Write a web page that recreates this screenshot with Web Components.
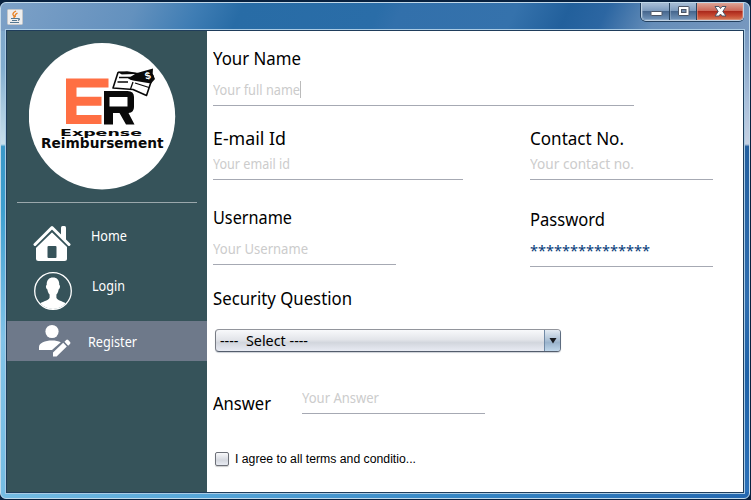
<!DOCTYPE html>
<html lang="en"><head><meta charset="utf-8"><title>Register</title>
<style>
html,body{margin:0;height:100%;overflow:hidden;background:#0b3a70;font-family:"Noto Sans",sans-serif}
</style></head><body>
<app-window>
  <side-bar slot="side">
    <nav-item icon="home" style="--h:46px;--x:84px;--y:5px" w="36">Home</nav-item>
    <nav-item icon="login" style="--h:53px;--x:85px;--y:9px" w="33">Login</nav-item>
    <nav-item icon="register" active style="--h:40px;--x:81px;--y:12px" w="49">Register</nav-item>
  </side-bar>
  <register-form></register-form>
</app-window>
<script>
const define=(name,html,after)=>customElements.define(name,class extends HTMLElement{
  connectedCallback(){
    if(this.shadowRoot)return;
    const t=document.createElement('template');
    t.innerHTML=typeof html==='function'?html(this):html;
    this.attachShadow({mode:'open'}).append(t.content.cloneNode(true));
    if(after)after(this);
  }
});

/* A line of text condensed or widened to a given width. */
define('fit-text',`<style>:host{display:block;white-space:pre;width:max-content}
span{display:inline-block;vertical-align:top;transform-origin:0 0}</style><span><slot></slot></span>`,el=>{
  const w=+el.getAttribute('w'),s=el.shadowRoot.querySelector('span');
  if(w){
    s.style.transform='scaleX('+w/s.getBoundingClientRect().width+')';
    el.style.width=w+'px';
  }
});

const icons={
home:`<svg width="38" height="37" viewBox="0 0 38 37" style="margin:2px 0 0 26px"><path fill="#fff" d="M19 7.500 34 22v12.500q0 2.500-2.500 2.500H5.500Q3 37 3 34.500V22z"/><path fill="none" stroke="#36535a" stroke-width="5.500" d="M1 22 19 4.500 37 22"/><path fill="#fff" d="M28 3.500q0-1.500 1.500-1.500h2q1.500 0 1.500 1.500V18l-5-5z"/><path fill="none" stroke="#fff" stroke-width="3" stroke-linecap="round" stroke-linejoin="round" d="M2 20.500 19 3.500 36 20.500"/><rect x="14.500" y="22" width="9" height="12" rx="1" fill="#36535a"/></svg>`,
login:`<svg width="38" height="38" viewBox="0 0 38 38" style="margin:4px 0 0 27px"><circle cx="19" cy="19" r="18.300" fill="none" stroke="#fff" stroke-width="1.300"/><path fill="#fff" d="M12.700 13C12.500 8 15 5.500 19 5.500s6.500 2.500 6.300 7.500c1.200.3.900 3.700-.7 4.500-.3 2.500-1.200 4-2.200 5v3.200c1.200 2.800 6 3.500 9.300 5.500A17.800 17.800 0 0 1 19 37a17.800 17.800 0 0 1-12.700-5.800c3.300-2 8.100-2.700 9.300-5.500v-3.200c-1-1-1.900-2.500-2.200-5-1.600-.8-1.900-4.200-.7-4.500z"/></svg>`,
register:`<svg width="34" height="34" viewBox="0 0 34 34" style="margin:3px 0 0 31px"><circle cx="14" cy="7.500" r="6.600" fill="#fff"/><path fill="#fff" d="M1 26v-3c0-4 6-6.500 13-6.500 3.500 0 6.500.5 8.800 1.700L14 26z"/><path fill="#fff" d="m15 28.500 10.200-9.700 3.600 3.800L18.600 32.500H15zM26.500 17.700l1.700-1.700q1-.9 2 .1l1.900 2q.8 1-.1 1.900l-1.800 1.700z"/></svg>`};

define('nav-item',e=>`<style>
:host{display:flex;position:relative;height:var(--h);color:#fff;font-size:14px}
:host([active]){background:#6e798a}
svg{display:block}
fit-text{position:absolute;left:var(--x);top:var(--y);line-height:18px}
</style>${icons[e.getAttribute('icon')]}<fit-text w="${e.getAttribute('w')}">${e.textContent}</fit-text>`);

define('brand-logo',`<style>:host{display:block;width:147px;height:147px}svg{display:block}</style>
<svg width="147" height="147" viewBox="0 0 147 147"><circle cx="73" cy="73.200" r="73.200" fill="#fff"/>
<path fill="#ff6f43" d="M37 35.500H79.500V44.500H47.500V53.700H72.500V62.700H47.500V72H72.500V81H37z"/>
<path fill="#090909" fill-rule="evenodd" d="M75 48H98.500q6.500 0 6.500 6v10q0 5.500-5.500 6L105.500 81.500H97L90.500 70H84V81.500H75zM80.500 54V63.500H98.500V54z"/>
<path fill="#fff" stroke="#090909" stroke-width="1.600" stroke-linejoin="round" d="M89 29.500 84 45 104 46.500 117.500 52.500 122 39 124 33 98 29z"/>
<path fill="#090909" d="M89 28.500 108 30l16-4.500-.3 5 2.300 5.500-4 4.500-24-4z"/>
<path fill="#fff" d="M90.500 31.500 106 31l-7 4.500 6 3-17 1z"/>
<path fill="none" stroke="#090909" stroke-width="1.300" d="M90 34.500h13M88.500 39H99M104 39 101.500 46M106 40l14 4.500"/>
<text x="116" y="36" font-family="Liberation Sans" font-weight="bold" font-size="10" fill="#fff" transform="rotate(-15 119 33)">$</text>
<g font-family="DejaVu Sans" font-weight="bold" fill="#090909"><text x="31" y="93" font-size="9.500" textLength="82" lengthAdjust="spacingAndGlyphs">Expense</text>
<text x="12" y="105.300" font-size="13.500" textLength="122.500" lengthAdjust="spacingAndGlyphs">Reimbursement</text></g></svg>`);

define('side-bar',`<style>
:host{display:block;width:200px;background:#36535a}
brand-logo{margin:12px 0 0 22px}
hr{border:0;height:1px;background:#9ba8ac;margin:12px 10px 19px}
.wrap{display:flow-root}
</style><div class="wrap"><brand-logo></brand-logo><hr><slot></slot></div>`);

define('text-field',e=>`<style>
:host{display:block;width:var(--w)}
.label{font-size:18px;line-height:24px;color:#000}
.value{font-size:14px;line-height:18px;color:#ccc;margin-top:var(--gap,11px);display:flex}
:host([bare]) .value{margin-top:0}
:host([secret]) .value{color:#043a78}
i{width:1px;height:17px;background:#bbb}
.line{height:1px;background:#a6a9b3;margin-top:var(--pad,6px)}
</style>${e.hasAttribute('label')?`<fit-text class="label" w="${e.getAttribute('lw')}">${e.getAttribute('label')}</fit-text>`:''}
<div class="value"><fit-text w="${e.getAttribute('vw')}">${e.getAttribute('value')}</fit-text>${e.hasAttribute('caret')?'<i></i>':''}</div><div class="line"></div>`);

define('combo-box',`<style>
:host{display:flex;box-sizing:border-box;width:346px;height:23px;border:1px solid #7b7f89;border-color:#92959c #5d6c80 #535d6c #777b84;border-radius:4px;overflow:hidden;background:linear-gradient(#f8f9fb,#e3e5ea 45%,#d2d6dd 60%,#e8ebf3);box-shadow:0 1px 1px #ccd0d6}
fit-text{flex:none;margin-left:4px;font-size:14px;line-height:22px;color:#000}
.arrow{margin-left:auto;width:16px;box-sizing:border-box;border-left:1px solid #718aa6;background:linear-gradient(#e3ebf3,#afc3d7 45%,#9ab3cc 60%,#c0d7eb);display:flex;align-items:center;justify-content:center}
svg{display:block}
</style><fit-text w="88">----  Select ----</fit-text><div class="arrow"><svg width="8" height="6"><path d="M.5 0h7L4 5.500z" fill="#181b20"/></svg></div>`);

define('check-box',e=>`<style>
:host{display:flex;align-items:center;gap:6px;height:16px;font:12px "Liberation Sans",sans-serif;color:#000}
.box{box-sizing:border-box;width:14px;height:14px;border:1px solid #6d7078;border-radius:2px;background:linear-gradient(#f9f9fb,#d5d8df 60%,#e8ebf2);box-shadow:0 1px 1px #ccc}
</style><div class="box"></div><fit-text w="181">${e.textContent}</fit-text>`);

define('register-form',`<style>
:host{display:flex;flex-direction:column;flex:1;box-sizing:border-box;padding:15px 0 0 6px;background:#fff}
.row{display:flex}
.title{font-size:18px;line-height:24px;color:#000}
</style>
<text-field style="--w:421px" label="Your Name" lw="88" value="Your full name" vw="87" caret></text-field>
<div class="row" style="margin-top:20px;gap:67px">
<text-field style="--w:250px;--gap:5px" label="E-mail Id" lw="73" value="Your email id" vw="77"></text-field>
<text-field style="--w:183px;--gap:5px" label="Contact No." lw="94" value="Your contact no." vw="104"></text-field></div>
<div class="row" style="margin-top:25px;gap:134px">
<text-field style="--w:183px" label="Username" lw="79" value="Your Username" vw="95"></text-field>
<text-field secret style="--w:183px;padding-top:2px" label="Password" lw="75" value="***************" vw="120"></text-field></div>
<fit-text class="title" style="margin-top:19px" w="139">Security Question</fit-text>
<combo-box style="margin:19px 0 0 2px"></combo-box>
<div class="row" style="margin-top:37px">
<fit-text class="title" style="margin-top:2px" w="58">Answer</fit-text>
<text-field bare style="--w:183px;margin-left:31px" value="Your Answer" vw="77"></text-field></div>
<check-box style="margin:36px 0 0 2px">I agree to all terms and conditio...</check-box>`);

define('window-buttons',`<style>
:host{display:flex;box-sizing:border-box;width:103px;height:18px;border:1px solid #c0d1e2;border-top:0;border-radius:0 0 5px 5px;margin-right:5px;box-shadow:0 1px 0 #23405f,-1px 0 0 #23405f}
div{width:28px;display:flex;justify-content:center;align-items:center;background:linear-gradient(#a9bfd7,#7d9bbd 45%,#47678e 50%,#7396bb);box-shadow:inset -1px 0 #29445f,inset 0 0 0 1px #9eb6ce80}
.min{border-radius:0 0 0 4px}
.max{width:27px}
.close{flex:1;border-radius:0 0 4px;background:linear-gradient(#dda496,#cc6858 45%,#ac2a1c 50%,#c64a32 75%,#d47c58);box-shadow:inset 0 0 0 1px #e3a29380}
</style><div class="min"><svg width="13" height="13"><rect x="1" y="6.500" width="11" height="4" rx=".5" fill="#fff" stroke="#4b5566"/></svg></div>
<div class="max"><svg width="12" height="11"><rect x=".5" y=".5" width="10.500" height="9" rx=".5" fill="#fff" stroke="#4b5566"/><rect x="3.500" y="3.500" width="4.500" height="3" fill="#718cae" stroke="#4b5566"/></svg></div>
<div class="close"><svg width="13" height="11" viewBox="0 0 13 11"><path d="M1 .5h4l1.500 2 1.500-2h4L8.800 5.500 12 10H8L6.500 8 5 10H1l3.200-4.500z" fill="#fff" stroke="#4b5566"/></svg></div>`);

define('app-window',`<style>
:host{display:flex;flex-direction:column;box-sizing:border-box;position:relative;width:751px;height:500px;padding:2px 1px 1px 0;background:#08213f}
.frame{display:flex;flex-direction:column;flex:1;box-sizing:border-box;border:1px solid #c2d9ea;border-radius:6px;
background:
linear-gradient(90deg,#75bce3,#55a5d8 28%,#3788c6 60%,#2468b0) bottom/100% 6px no-repeat,
linear-gradient(115deg,#7da1c7 0,#6c96c1 12%,#6391be 18%,#3f7db4 26%,#286ca6 32%,#2a6da8 50%,#3270ab 53%,#3572ac 68%,#22609c 75%,#2c66a2 80%,#668eb9 87%,#7798bf 100%) top/100% 28px no-repeat,
linear-gradient(#7fa5c9 0,#81adcf 13%,#a9c9df 21%,#c8dfec 28.500%,#3a97c8 29%,#3e9fd0 42%,#82c3e8 68%,#75bce3) left/6px 100% no-repeat,
linear-gradient(#7597bf 0,#7f9fc5 8%,#aabfda 20%,#c5d1e3 28.500%,#235f9f 29%,#2f6eb0 60%,#1e62a8 75%,#2c72ba) right/7px 100% no-repeat,#3478b4}
header{height:27px;flex:none;display:flex;justify-content:space-between;align-items:flex-start}
.java{margin:6px 0 0 6px;display:block}
.body{display:flex;flex:1;margin:0 5px 5px;border:1px solid #1f3d5b;box-shadow:0 0 0 1px #aacbe4}
</style><div class="frame"><header>
<svg class="java" width="16" height="16"><rect x=".5" y=".5" width="15" height="15" rx="1" fill="#eee" stroke="#c4c7ca"/><path d="M9 2Q4.500 4.500 6.500 6.500 8 8 6.500 9M10.500 4Q7 6 8.500 8" fill="none" stroke="#e88123" stroke-width="1.300"/><path d="M4 9.500h7M5 11.500h5M3 13.500h9M11 9.500q3 0 0 2" fill="none" stroke="#527791" stroke-width="1.200"/></svg>
<window-buttons></window-buttons></header>
<div class="body"><slot name="side"></slot><slot></slot></div></div>`);
</script></body></html>
